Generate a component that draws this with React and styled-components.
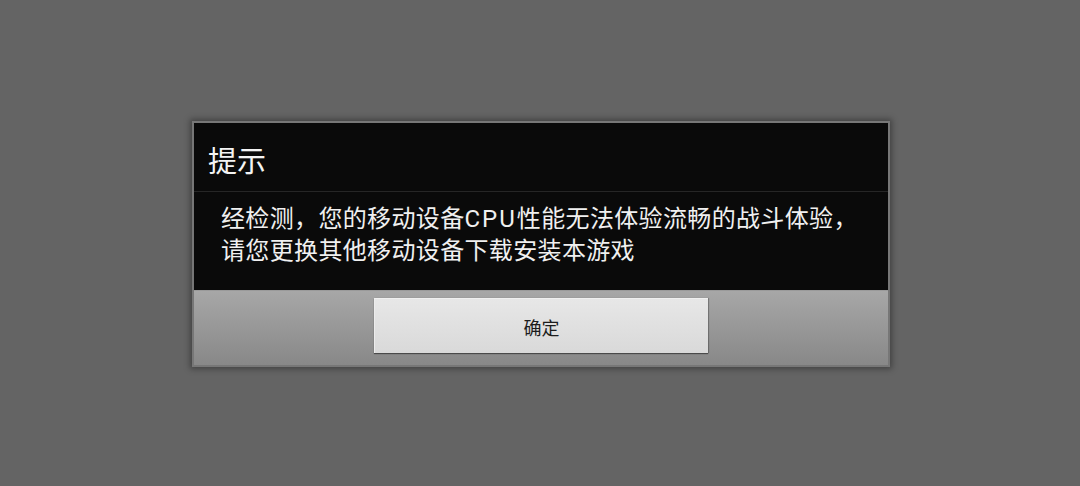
import React from "react";
import styled, { createGlobalStyle } from "styled-components";

const Global = createGlobalStyle`
  html, body { margin: 0; padding: 0; background: #646464; }
  body { font-family: Roboto, "Noto Sans CJK SC", sans-serif; }
`;

const Page = styled.div`
  width: 1080px;
  height: 486px;
  box-sizing: border-box;
  padding: 121px 0 0 192px;
  display: flex;
  align-items: flex-start;
  background: #646464;
`;

const Dialog = styled.div`
  width: 698px;
  box-sizing: border-box;
  border: 2px solid #777777;
  box-shadow: 0 0 6px 2px rgba(0, 0, 0, 0.35);
  display: flex;
  flex-direction: column;
  background: #0a0a0a;
`;

const Title = styled.div`
  height: 60px;
  padding: 8px 0 0 14px;
  line-height: 62px;
  font-size: 29px;
  color: #f4f4f4;
  border-bottom: 1px solid #262626;
`;

const Message = styled.div`
  height: 87px;
  padding: 11px 27px 0 27px;
  font-size: 24px;
  line-height: 32px;
  letter-spacing: 0.35px;
  color: #f0f0f0;
`;

const Latin = styled.span`
  letter-spacing: 2px;
`;

const Bar = styled.div`
  height: 75px;
  box-sizing: border-box;
  padding-top: 7px;
  display: flex;
  justify-content: center;
  align-items: flex-start;
  background: linear-gradient(180deg, #a7a7a7 0%, #888888 100%);
  border-top: 1px solid #9a9a9a;
`;

const Button = styled.button`
  width: 334px;
  height: 55px;
  border: none;
  border-top: 1px solid #f0f0f0;
  border-left: 1px solid #ececec;
  background: linear-gradient(180deg, #e7e7e7 0%, #d9d9d9 100%);
  box-shadow: 0 1px 1px rgba(0, 0, 0, 0.45), 1px 0 1px rgba(0, 0, 0, 0.2);
  font-family: Roboto, "Noto Sans CJK SC", sans-serif;
  font-size: 18px;
  color: #1c1c1c;
  padding: 0;
  padding-top: 1px;
  cursor: pointer;
`;

export default function App() {
  return (
    <>
      <Global />
      <Page>
        <Dialog>
          <Title>提示</Title>
          <Message>
            经检测，您的移动设备<Latin>CPU</Latin>性能无法体验流畅的战斗体验，
            <br />
            请您更换其他移动设备下载安装本游戏
          </Message>
          <Bar>
            <Button>确定</Button>
          </Bar>
        </Dialog>
      </Page>
    </>
  );
}
